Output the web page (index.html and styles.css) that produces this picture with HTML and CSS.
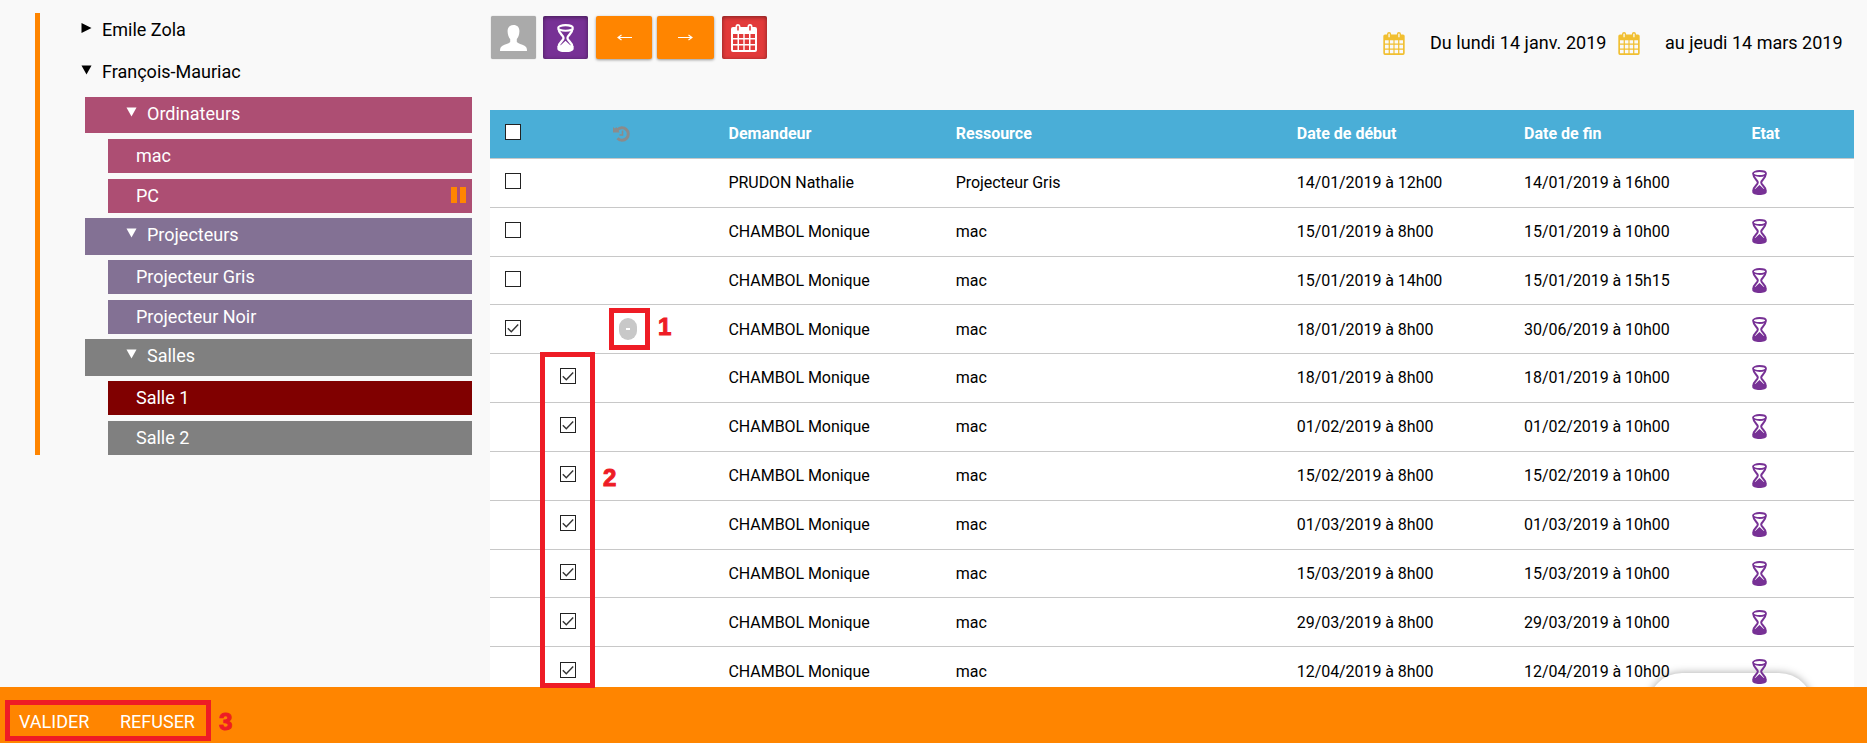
FILE: index.html
```html
<!DOCTYPE html>
<html lang="fr">
<head>
<meta charset="utf-8">
<title>Réservations</title>
<link rel="stylesheet" href="styles.css">
</head>
<body>
<svg class="defs" width="0" height="0">
  <symbol id="hourglass" viewBox="0 0 15 25">
    <path d="M1.400 4.500C1.400 8.500 5.800 10 5.800 12.500S1.400 16.500 1.400 20.500M13.600 4.500C13.600 8.500 9.200 10 9.200 12.500S13.600 16.500 13.600 20.500" fill="none" stroke="currentColor" stroke-width="2"/>
    <ellipse cx="7.500" cy="3.500" rx="6.500" ry="2.500" fill="none" stroke="currentColor" stroke-width="1.800"/>
    <path d="M.3 20.500C.3 19.600 1.500 19.200 3.500 18.700L7.500 15L11.500 18.700C13.500 19.200 14.700 19.600 14.700 20.500V22C14.700 24 11.500 25 7.500 25S.3 24 .3 22Z" fill="currentColor"/>
  </symbol>
  <symbol id="calendar" viewBox="0 0 26 28">
    <path fill="currentColor" fill-rule="evenodd" d="M2 3H4.500V2.500A2.500 2.500 0 0 1 9.500 2.500V3H16.500V2.500A2.500 2.500 0 0 1 21.500 2.500V3H24A2 2 0 0 1 26 5V26A2 2 0 0 1 24 28H2A2 2 0 0 1 0 26V5A2 2 0 0 1 2 3ZM6.200 2.500V6.500H7.800V2.500A.8 .8 0 0 0 6.200 2.500ZM18.200 2.500V6.500H19.800V2.500A.8 .8 0 0 0 18.200 2.500ZM2 10H6.500V14H2ZM8 10H12.300V14H8ZM13.700 10H18V14H13.700ZM19.500 10H24V14H19.500ZM2 15.500H6.500V20H2ZM8 15.500H12.300V20H8ZM13.700 15.500H18V20H13.700ZM19.500 15.500H24V20H19.500ZM2 21.500H6.500V26H2ZM8 21.500H12.300V26H8ZM13.700 21.500H18V26H13.700ZM19.500 21.500H24V26H19.500Z"/>
  </symbol>
  <symbol id="check" viewBox="0 0 16 16">
    <path d="M2.800 8.300L6.300 11.800L13.200 4.600" fill="none" stroke="#333" stroke-width="1.400"/>
  </symbol>
</svg>

<div class="page">
  <nav class="tree">
    <div class="site"><svg class="tri" viewBox="0 0 10 10"><path d="M0 0L10 5L0 10Z"/></svg>Emile Zola</div>
    <div class="site"><svg class="tri" viewBox="0 0 10 10"><path d="M0 .5H10L5 9.500Z"/></svg>François-Mauriac</div>
    <div class="group g-first pink"><svg class="tri" viewBox="0 0 10 10"><path d="M0 .5H10L5 9.500Z"/></svg>Ordinateurs</div>
    <div class="leaf pink">mac</div>
    <div class="leaf pink">PC<span class="pause"><i></i><i></i></span></div>
    <div class="group violet"><svg class="tri" viewBox="0 0 10 10"><path d="M0 .5H10L5 9.500Z"/></svg>Projecteurs</div>
    <div class="leaf violet">Projecteur Gris</div>
    <div class="leaf violet">Projecteur Noir</div>
    <div class="group gray"><svg class="tri" viewBox="0 0 10 10"><path d="M0 .5H10L5 9.500Z"/></svg>Salles</div>
    <div class="leaf maroon">Salle 1</div>
    <div class="leaf gray">Salle 2</div>
  </nav>

  <main class="main">
    <div class="toolbar">
      <span class="btn user"><svg width="27" height="26" viewBox="0 0 27 26"><path fill="#fff" d="M13.500 0C17.500 0 19.600 2.500 19.400 6.500C19.300 10 18.200 12.500 16.800 14V17C18 18.700 22 19.300 24.500 20.700C26.500 21.800 27 23.500 27 26H0C0 23.500 .5 21.800 2.500 20.700C5 19.300 9 18.700 10.200 17V14C8.800 12.500 7.700 10 7.600 6.500C7.400 2.500 9.500 0 13.500 0Z"/></svg></span>
      <span class="btn wait"><svg width="17" height="28" viewBox="0 0 15 25" preserveAspectRatio="none"><use href="#hourglass" width="15" height="25"/></svg></span>
      <span class="btn arrow prev"><svg width="15" height="7" viewBox="0 0 15 7"><path d="M15 3.500H1M4.500 1L1 3.500L4.500 6" fill="none" stroke="#fff" stroke-width="1.100"/></svg></span>
      <span class="btn arrow next"><svg width="15" height="7" viewBox="0 0 15 7"><path d="M0 3.500H14M10.500 1L14 3.500L10.500 6" fill="none" stroke="#fff" stroke-width="1.100"/></svg></span>
      <span class="btn cal"><svg width="26" height="28"><use href="#calendar"/></svg></span>
      <div class="dates">
        <svg width="22" height="23"><use href="#calendar"/></svg><span class="from">Du lundi 14 janv. 2019</span>
        <svg width="22" height="23"><use href="#calendar"/></svg><span class="to">au jeudi 14 mars 2019</span>
      </div>
    </div>

    <div class="table">
      <div class="pill"></div>
      <div class="row head"><b class="box"></b><span></span><span class="hist"><svg width="17" height="16" viewBox="0 0 17 16"><path d="M4.200 4.200A6.200 6.200 0 1 1 4.500 12.200" fill="none" stroke="#8b8b8b" stroke-width="3"/><path d="M0 1L1.800 2.600L3.500 1L6.500 6.500H0Z" fill="#8b8b8b"/><path d="M9.500 4.500V9H6.500" fill="none" stroke="#8b8b8b" stroke-width="1.600"/></svg></span><span>Demandeur</span><span>Ressource</span><span>Date de début</span><span>Date de fin</span><span>Etat</span></div>
      <div class="row"><b class="box"></b><span></span><span></span><span>PRUDON Nathalie</span><span>Projecteur Gris</span><span>14/01/2019 à 12h00</span><span>14/01/2019 à 16h00</span><svg class="hg"><use href="#hourglass"/></svg></div>
      <div class="row"><b class="box"></b><span></span><span></span><span>CHAMBOL Monique</span><span>mac</span><span>15/01/2019 à 8h00</span><span>15/01/2019 à 10h00</span><svg class="hg"><use href="#hourglass"/></svg></div>
      <div class="row"><b class="box"></b><span></span><span></span><span>CHAMBOL Monique</span><span>mac</span><span>15/01/2019 à 14h00</span><span>15/01/2019 à 15h15</span><svg class="hg"><use href="#hourglass"/></svg></div>
      <div class="row"><b class="box"><svg><use href="#check"/></svg></b><span></span><span class="minus"><i></i></span><span>CHAMBOL Monique</span><span>mac</span><span>18/01/2019 à 8h00</span><span>30/06/2019 à 10h00</span><svg class="hg"><use href="#hourglass"/></svg></div>
      <div class="row"><span></span><b class="box"><svg><use href="#check"/></svg></b><span></span><span>CHAMBOL Monique</span><span>mac</span><span>18/01/2019 à 8h00</span><span>18/01/2019 à 10h00</span><svg class="hg"><use href="#hourglass"/></svg></div>
      <div class="row"><span></span><b class="box"><svg><use href="#check"/></svg></b><span></span><span>CHAMBOL Monique</span><span>mac</span><span>01/02/2019 à 8h00</span><span>01/02/2019 à 10h00</span><svg class="hg"><use href="#hourglass"/></svg></div>
      <div class="row"><span></span><b class="box"><svg><use href="#check"/></svg></b><span></span><span>CHAMBOL Monique</span><span>mac</span><span>15/02/2019 à 8h00</span><span>15/02/2019 à 10h00</span><svg class="hg"><use href="#hourglass"/></svg></div>
      <div class="row"><span></span><b class="box"><svg><use href="#check"/></svg></b><span></span><span>CHAMBOL Monique</span><span>mac</span><span>01/03/2019 à 8h00</span><span>01/03/2019 à 10h00</span><svg class="hg"><use href="#hourglass"/></svg></div>
      <div class="row"><span></span><b class="box"><svg><use href="#check"/></svg></b><span></span><span>CHAMBOL Monique</span><span>mac</span><span>15/03/2019 à 8h00</span><span>15/03/2019 à 10h00</span><svg class="hg"><use href="#hourglass"/></svg></div>
      <div class="row"><span></span><b class="box"><svg><use href="#check"/></svg></b><span></span><span>CHAMBOL Monique</span><span>mac</span><span>29/03/2019 à 8h00</span><span>29/03/2019 à 10h00</span><svg class="hg"><use href="#hourglass"/></svg></div>
      <div class="row"><span></span><b class="box"><svg><use href="#check"/></svg></b><span></span><span>CHAMBOL Monique</span><span>mac</span><span>12/04/2019 à 8h00</span><span>12/04/2019 à 10h00</span><svg class="hg"><use href="#hourglass"/></svg></div>
    </div>
  </main>

  <footer class="actions"><span class="ok">VALIDER</span><span>REFUSER</span></footer>

  <div class="mark mark1"></div><div class="num num1">1</div>
  <div class="mark mark2"></div><div class="num num2">2</div>
  <div class="mark mark3"></div><div class="num num3">3</div>
</div>
</body>
</html>
```
FILE: styles.css
```css
* { box-sizing: border-box; }
body { margin: 0; background: #f9f9f9; font-family: Roboto, sans-serif; color: #000; overflow: hidden; }
.defs { position: absolute; }
.page { position: relative; width: 1867px; height: 743px; overflow: hidden; display: grid; grid-template-columns: 490px 1377px; grid-template-rows: 687px 56px; }

.tree { margin: 13px 18px 0 35px; height: 442px; border-left: 5px solid #ff8500; font-size: 18px; display: flex; flex-direction: column; }
.tri { width: 11px; height: 10px; fill: currentColor; flex: none; margin-bottom: 3px; }
.site { height: 40px; flex: none; padding: 1px 0 0 41px; display: flex; align-items: center; gap: 10px; line-height: 34px; }
.site:first-child { height: 34px; padding-top: 0; margin-bottom: 4px; }
.site:first-child .tri { margin-bottom: 4px; }
.group { height: 37px; flex: none; margin: 5px 0 5px 45px; padding: 0 0 4px 41px; color: #fff; display: flex; align-items: center; gap: 10px; }
.group.g-first { height: 36px; margin: 6px 0 6px 45px; padding-bottom: 3px; }
.leaf { height: 34px; flex: none; margin-left: 68px; padding: 0 5px 2px 28px; color: #fff; display: flex; align-items: center; justify-content: space-between; }
.leaf + .leaf { margin-top: 6px; }
.pink { background: #ad4e73; }
.violet { background: #837194; }
.gray { background: #808080; }
.maroon { background: #800000; }
.pause { display: flex; gap: 3px; padding-right: 1px; }
.pause i { width: 6px; height: 16px; background: #ff8500; }

.main { overflow: hidden; }
.toolbar { height: 110px; padding: 16px 12px 0 0; display: flex; align-items: flex-start; }
.btn { height: 43px; border-radius: 2px; display: flex; align-items: center; justify-content: center; color: #fff; flex: none; }
.user { width: 45px; margin-left: 1px; padding-right: 1px; background: #aaa; box-shadow: 0 0 1px #999; }
.wait { width: 45px; margin-left: 7px; padding-right: 1px; background: #773195; box-shadow: inset 0 1px 4px rgba(0,0,0,.45); }
.arrow { background: #ff8500; box-shadow: 0 1px 3px rgba(0,0,0,.4); }
.prev { width: 56px; margin-left: 8px; }
.next { width: 57px; margin-left: 5px; }
.cal { width: 45px; margin-left: 8px; padding-right: 2px; background: #e23a3a; box-shadow: inset 0 1px 4px rgba(0,0,0,.45); }
.dates { margin: 16px 0 0 616px; display: flex; color: #f1bf30; font-size: 18px; line-height: 21px; white-space: nowrap; }
.dates svg { flex: none; }
.dates span { color: #000; }
.from { margin: 0 12px 0 25px; width: 176px; letter-spacing: .04px; }
.to { margin-left: 25px; }

.table { position: relative; width: 1364px; height: 577px; background: #fff; overflow: hidden; font-size: 16px; letter-spacing: -.06px; }
.row { position: relative; height: 48.85px; border-bottom: 1px solid #c8c8c8; padding: 0 0 .3px 15px; display: grid; grid-template-columns: 55px 54px 114.500px 227.300px 341px 227.300px 227.300px 1fr; align-items: center; white-space: nowrap; }
.head { background: #4aaed7; color: #fff; font-weight: bold; letter-spacing: 0; }
.box { width: 16px; height: 16px; border: 1px solid #222; background: #fff; margin-bottom: 3px; display: block; }
.box svg { display: block; width: 16px; height: 16px; margin: -1px; }
.hist { height: 16px; margin-left: -1px; }
.hist svg { display: block; }
.minus { width: 18px; height: 22px; margin-left: 5px; border-radius: 9px; background: #c8c8c8; display: flex; align-items: center; justify-content: center; }
.minus i { width: 4px; height: 2px; background: #fff; }
.hg { width: 15px; height: 25px; margin-left: .6px; color: #773195; }
.pill { position: absolute; left: 1158px; top: 563px; width: 165px; height: 68px; border-radius: 34px; background: #fff; box-shadow: 0 0 8px rgba(0,0,0,.35); }

.actions { grid-column: 1 / 3; background: #ff8500; color: #fff; font-size: 18px; padding: 12px 0 0 19px; display: flex; align-items: center; gap: 30px; }
.ok { width: 71px; }

.mark { position: absolute; border: 5px solid #ee1c25; }
.mark1 { left: 609px; top: 308px; width: 41px; height: 42px; }
.mark2 { left: 540px; top: 352px; width: 55px; height: 336px; }
.mark3 { left: 5px; top: 700px; width: 206px; height: 41px; }
.num { position: absolute; font: bold 24px/24px "Liberation Sans", Arial, sans-serif; color: #ee1c25; -webkit-text-stroke: 1px #ee1c25; }
.num1 { left: 658px; top: 315px; }
.num2 { left: 603px; top: 466px; }
.num3 { left: 219px; top: 710px; }
```
